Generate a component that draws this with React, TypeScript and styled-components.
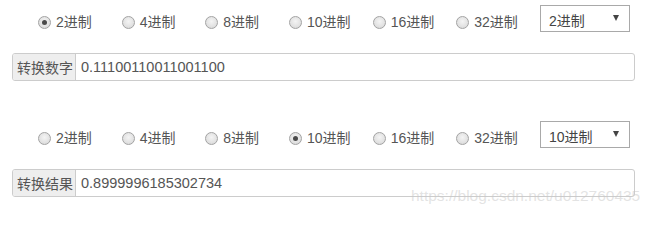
import React from "react";
import styled, { createGlobalStyle } from "styled-components";

const Global = createGlobalStyle`
  html, body { margin: 0; padding: 0; background: #fff; }
  body {
    font-family: "Liberation Sans", "Noto Sans CJK SC", sans-serif;
    font-size: 14px;
    color: #555;
  }
`;

const Page = styled.div`
  position: relative;
  width: 655px;
  height: 215px;
  box-sizing: border-box;
  padding: 5px 20px 0 12px;
  display: flex;
  flex-direction: column;
  gap: 40px;
  overflow: hidden;
`;

const Block = styled.section`
  display: flex;
  flex-direction: column;
  gap: 21px;
`;

const OptionRow = styled.div`
  display: grid;
  grid-template-columns: repeat(6, 83.67px) 90px;
  align-items: end;
  padding-left: 26px;
  height: 27px;
`;

const RadioLabel = styled.label`
  display: flex;
  align-items: center;
  gap: 5px;
  height: 20px;
  line-height: 20px;
  color: #555;
  white-space: nowrap;
`;

const RadioDot = styled.span<{ $checked: boolean }>`
  position: relative;
  width: 11px;
  height: 11px;
  border-radius: 50%;
  border: 1px solid #a3a3a3;
  background: radial-gradient(circle at 50% 40%, #f4f4f4 0%, #e2e2e2 60%, #d2d2d2 100%);
  flex: none;
  &::after {
    content: "";
    display: ${(p) => (p.$checked ? "block" : "none")};
    position: absolute;
    left: 3px;
    top: 3px;
    width: 5px;
    height: 5px;
    border-radius: 50%;
    background: #4a4a4a;
  }
`;

const SelectBox = styled.div`
  align-self: start;
  box-sizing: border-box;
  width: 90px;
  height: 27px;
  border: 1px solid #a9a9a9;
  background: #fff;
  display: flex;
  align-items: center;
  justify-content: space-between;
  padding: 2px 8px 0 8px;
  color: #444;
`;

const Caret = styled.span`
  width: 0;
  height: 0;
  border-left: 3.5px solid transparent;
  border-right: 3.5px solid transparent;
  border-top: 6px solid #444;
  margin-right: 2px;
  margin-top: -4px;
`;

const InputGroup = styled.div`
  display: flex;
  box-sizing: border-box;
  height: 28px;
  border: 1px solid #ccc;
  border-radius: 3px;
  overflow: hidden;
  background: #fff;
`;

const Addon = styled.span`
  display: flex;
  align-items: center;
  padding: 0 2px 0 4px;
  background: #eee;
  border-right: 1px solid #ccc;
  color: #555;
  white-space: nowrap;
`;

const Field = styled.input`
  flex: 1;
  border: none;
  outline: none;
  padding: 0 5px;
  font: inherit;
  font-size: 14.5px;
  color: #555;
  background: transparent;
`;

const Watermark = styled.div`
  position: absolute;
  left: 411px;
  top: 187px;
  font-family: "Liberation Sans", sans-serif;
  font-size: 15.5px;
  color: rgba(200, 200, 200, 0.5);
  pointer-events: none;
  white-space: nowrap;
`;

const bases = ["2进制", "4进制", "8进制", "10进制", "16进制", "32进制"];

function Converter({ checked, label, value, selected }: { checked: number; label: string; value: string; selected: string }) {
  return (
    <Block>
      <OptionRow>
        {bases.map((b, i) => (
          <RadioLabel key={b}>
            <RadioDot $checked={i === checked} />
            {b}
          </RadioLabel>
        ))}
        <SelectBox>
          <span>{selected}</span>
          <Caret />
        </SelectBox>
      </OptionRow>
      <InputGroup>
        <Addon>{label}</Addon>
        <Field defaultValue={value} readOnly />
      </InputGroup>
    </Block>
  );
}

export default function App() {
  return (
    <>
      <Global />
      <Page>
        <Converter checked={0} label="转换数字" value="0.11100110011001100" selected="2进制" />
        <Converter checked={3} label="转换结果" value="0.8999996185302734" selected="10进制" />
        <Watermark>https://blog.csdn.net/u012760435</Watermark>
      </Page>
    </>
  );
}
